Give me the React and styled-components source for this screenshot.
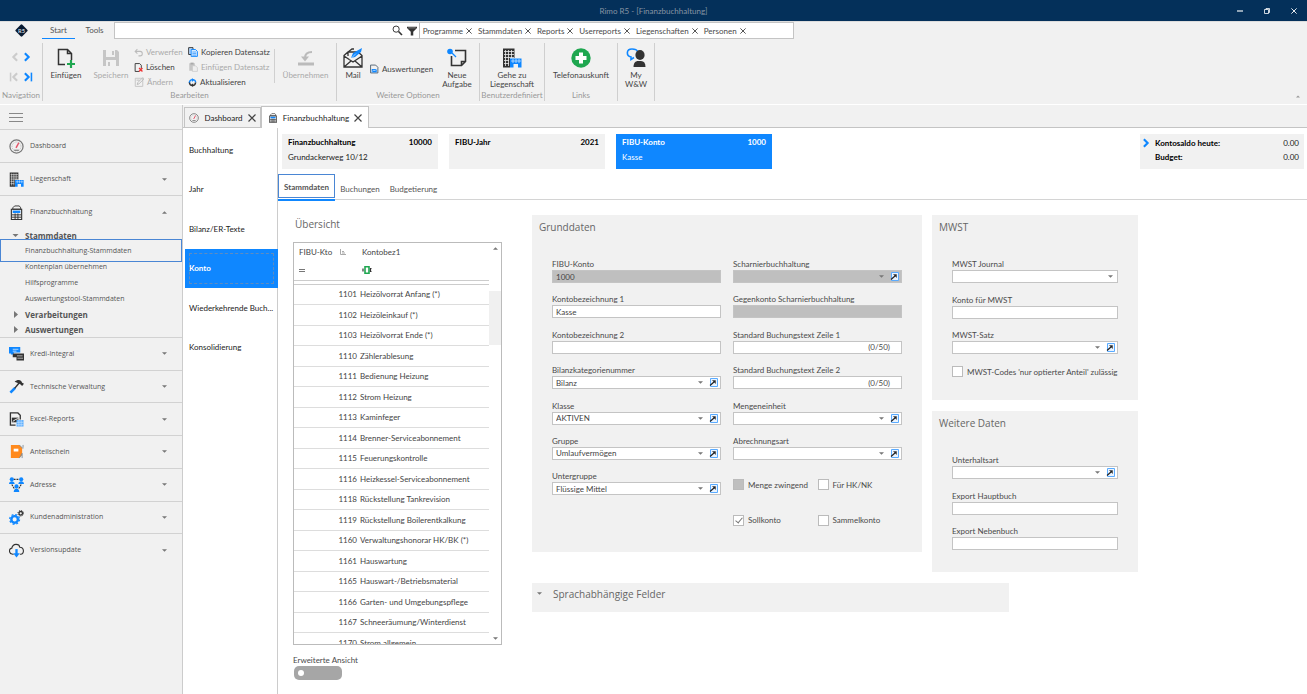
import React from 'react'
import styled, { createGlobalStyle, css } from 'styled-components'

const BLUE = '#0f87ff'
const DARK = '#333'
const GREEN = '#1fa750'

const GlobalStyle = createGlobalStyle`
  * {
    box-sizing: border-box;
  }

  body {
    margin: 0;
    background: #fff;
    color: #4a4a4a;
    font-family: Lato, 'Noto Sans', sans-serif;
    font-size: 8px;
    line-height: 10px;
  }

  button, input, select {
    margin: 0;
    padding: 0;
    border: 0;
    background: none;
    color: inherit;
    font: inherit;
  }

  h2, p, ul {
    margin: 0;
    padding: 0;
    font-weight: normal;
    list-style: none;
  }

  a {
    color: inherit;
    text-decoration: none;
  }

  svg {
    display: block;
    flex: none;
  }
`

/* ---------- icons ---------- */

const Icon = ({ w = 16, h = w, box = '0 0 16 16', children }) => (
  <svg width={w} height={h} viewBox={box} fill='none' aria-hidden='true'>{children}</svg>
)

const Logo = () => (
  <Icon w={13} h={13}>
    <path d='M8 2 14 8 8 14 2 8Z' fill='#0a1c33' stroke='#0a1c33' strokeWidth='3' strokeLinejoin='round' />
    <text x='8' y='10.500' fontSize='7' fontWeight='bold' textAnchor='middle' fill='#ccd4dd'>R5</text>
  </Icon>
)

const Chevron = ({ left, bar, color }) => (
  <Icon w={10}>
    <g transform={left ? 'translate(16 0) scale(-1 1)' : undefined} stroke={color} strokeWidth='3.400'>
      <path d='M3 2l6 6-6 6' />
      {bar && <path d='M13.500 1v14' strokeWidth='2.500' />}
    </g>
  </Icon>
)

const Caret = ({ up, w = 5, color = '#777' }) => (
  <Icon w={w} h={3} box='0 0 6 3'>
    <path d={up ? 'M0 3h6L3 0Z' : 'M0 0h6L3 3Z'} fill={color} />
  </Icon>
)

const Cross = ({ size = 6, color = '#444' }) => (
  <Icon w={size}><path d='M1 1l14 14M15 1L1 15' stroke={color} strokeWidth='2.400' /></Icon>
)

const NewPage = () => (
  <Icon w={20} h={20} box='0 0 20 20'>
    <path d='M9 16.500H2.500V1.500h9l4 4V12M11.500 1.500v4h4' stroke={DARK} strokeWidth='1.500' />
    <path d='M15 12v8M11 16h8' stroke={GREEN} strokeWidth='2.200' />
  </Icon>
)

const Floppy = () => (
  <Icon w={18} h={18} box='0 0 18 18'>
    <path d='M1 1h14l2 2v14H1Z' fill='#c6c6c6' />
    <path d='M4 1h9v7H4ZM4 11h10v6H4Z' fill='#f1f1f1' />
    <path d='M10 2h2v4h-2ZM6 13h2v4H6Z' fill='#c6c6c6' />
  </Icon>
)

const Undo = () => (
  <Icon w={9}>
    <path d='M6 2L2 6l4 4M2 6h9c5 0 5 8 0 8H8' stroke='#bbb' strokeWidth='1.800' />
  </Icon>
)

const DeletePage = () => (
  <Icon w={9}>
    <path d='M9 15H2V1h8l3 3v6' stroke={DARK} strokeWidth='1.600' />
    <path d='M9 9l6 6M15 9l-6 6' stroke='#e33' strokeWidth='2.400' />
  </Icon>
)

const EditPage = () => (
  <Icon w={10}>
    <path d='M2 2h12v13H2Z' stroke='#c4c4c4' strokeWidth='1.500' />
    <path d='M5 12l1-3 8-8 2 2-8 8ZM4 5h5' stroke='#bbb' strokeWidth='1.500' />
  </Icon>
)

const CopyIcon = () => (
  <Icon w={10}>
    <path d='M1 1h7v11H1Z' fill='#b6d9ff' stroke={DARK} strokeWidth='1.500' />
    <path d='M5 4h7l3 3v8H5Z' fill='#d8ebff' stroke={BLUE} strokeWidth='1.500' />
    <path d='M7 8h6M7 10.500h6M7 13h6' stroke={BLUE} />
  </Icon>
)

const PasteIcon = () => (
  <Icon w={10}>
    <path d='M2 2h9v12H2Z' fill='#c6c6c6' />
    <path d='M4 1h5v3H4Z' fill='#aaa' />
    <path d='M7 6h5l3 3v6H7Z' fill='#eee' stroke='#c0c0c0' />
  </Icon>
)

const Refresh = () => (
  <Icon w={9}>
    <path d='M2.500 9C2 1 14 1 13.500 8' stroke={BLUE} strokeWidth='2.600' />
    <path d='M2.500 8C3 15 13 15 13.500 8' stroke={DARK} strokeWidth='2.600' />
    <path d='M7 0l4 3.500L7 7Z' fill={BLUE} />
    <path d='M9 9.500L5 13l4 3Z' fill={DARK} />
  </Icon>
)

const Apply = () => (
  <Icon w={18} h={16} box='0 0 18 16'>
    <path d='M1 14h16' stroke='#bbb' strokeWidth='3' />
    <path d='M15 2c-5 0-7 2-7 6' stroke='#bbb' strokeWidth='2' />
    <path d='M4 6.500l4 5 4-5Z' fill='#bbb' />
  </Icon>
)

const MailIcon = () => (
  <Icon w={20} h={20} box='0 0 20 20'>
    <path d='M1 7.500L5 4h10l4 3.500V19H1ZM1 8l9 6 9-6M1 19l7-6M19 19l-7-6M5 8V4l4-3h2' stroke={DARK} strokeWidth='1.300' />
    <path d='M8 10l2-5 9-5-1 4-6 5Z' fill={BLUE} />
    <path d='M7 11.500l6-6' stroke='#fff' strokeWidth='.6' />
  </Icon>
)

const ReportIcon = () => (
  <Icon w={9} h={10}>
    <path d='M1 1h9l4 4v10H1Z' stroke='#456' strokeWidth='1.500' />
    <path d='M3 8h9v6H3Z' fill={BLUE} />
    <path d='M4 12l3-2 2 1 3-3' stroke='#fff' />
  </Icon>
)

const TaskIcon = () => (
  <Icon w={20} h={20} box='0 0 20 20'>
    <path d='M8 2.500h10.500v11l-4 4H4.500V8M18.500 13.500h-4v4' stroke={DARK} strokeWidth='1.600' />
    <path d='M5 5l4 4' stroke={BLUE} strokeWidth='1.200' />
    <circle cx='3' cy='3.500' r='2.800' fill={BLUE} />
  </Icon>
)

const Buildings = ({ w = 20 }) => (
  <Icon w={w} box='0 0 20 20'>
    <path d='M1 .5h11.500V10H8v9.500H1Z' fill={DARK} />
    <path d='M3.500 2v16M6.500 2v16M9.500 2v8M2 3.500h10M2 6.500h10M2 9.500h10M2 12.500h5M2 15.500h5' stroke='#eee' strokeWidth='.8' />
    <path d='M8 10.500h11.500v9H16V16h-4.500v3.500H8Z' fill={BLUE} />
    <path d='M9 13h10M11 11v4M14 11v4M17 11v4' stroke='#d5e9ff' strokeWidth='.7' />
  </Icon>
)

const PlusCircle = () => (
  <Icon w={20} box='0 0 20 20'>
    <circle cx='10' cy='10' r='9.700' fill={GREEN} />
    <path d='M10 4.500v11M4.500 10h11' stroke='#fff' strokeWidth='4' />
  </Icon>
)

const PersonChat = () => (
  <Icon w={20} box='0 0 20 20'>
    <path d='M8 9.500l-3 2V9C0 8 0 1 6 1c3 0 5 1 5.500 2.500' stroke={BLUE} strokeWidth='1.600' />
    <ellipse cx='14' cy='7' rx='4.600' ry='5' fill={DARK} />
    <path d='M7.500 19c0-4 2-6 4.500-6h3c3 0 4.500 2 4.500 6Z' fill={DARK} />
  </Icon>
)

const SearchIcon = () => (
  <Icon w={11}>
    <circle cx='6' cy='6' r='4.500' stroke={DARK} strokeWidth='1.400' />
    <path d='M9.500 9.500l5 5' stroke={DARK} strokeWidth='2.400' />
  </Icon>
)

const Funnel = () => (
  <Icon w={10}>
    <path d='M0 1h16v2l-6 6v6H6V9L0 3Z' fill={DARK} />
    <path d='M2 3h12' stroke='#aaa' />
  </Icon>
)

const Gauge = ({ w = 15 }) => (
  <Icon w={w}>
    <circle cx='8' cy='8' r='7' stroke='#777' strokeWidth='1.300' />
    <circle cx='8' cy='8' r='4.800' stroke='#aaa' strokeWidth='.8' strokeDasharray='1 1' />
    <path d='M7.500 9.500L10.500 4' stroke='#e5566a' strokeWidth='1.600' />
    <path d='M5.500 12h5' stroke='#777' strokeWidth='1.200' />
  </Icon>
)

const Ledger = ({ w = 15 }) => (
  <Icon w={w}>
    <path d='M2.500 4.500h11v11h-11Z' fill='#eee' stroke={DARK} strokeWidth='1.200' />
    <path d='M4 4.500V3l2-2h5l1.500 2v1.500Z' stroke={DARK} />
    <path d='M4 6h8v2.500H4Z' fill={BLUE} />
    <path d='M3 10.500h10M3 13h10M6.500 9v6M9.500 9v6' stroke={DARK} />
  </Icon>
)

const Credit = () => (
  <Icon w={15}>
    <path d='M0 1h12v6H5v2H2V8H0Z' fill={BLUE} />
    <path d='M4 3.500h6M4 5.500h4' stroke='#b9dcff' />
    <path d='M4 8h12v7.500H8V12H4Z' fill={DARK} />
    <path d='M8.500 10.500h6M9 13h6' stroke='#bbb' />
  </Icon>
)

const Hammer = () => (
  <Icon w={15}>
    <path d='M1.500 14.500l5-5' stroke={BLUE} strokeWidth='2.800' />
    <path d='M6 10l5-6' stroke={DARK} strokeWidth='1.600' />
    <path d='M6 3c2-2 5-2.500 7-1l1 2 2 1-2 2.500-2-2-2-1Z' fill={DARK} />
  </Icon>
)

const ExcelIcon = () => (
  <Icon w={15}>
    <path d='M7 14H1.500V1h8L12 3.500V8' stroke={DARK} strokeWidth='1.400' />
    <path d='M3 6h7v5H3Z' fill={DARK} />
    <path d='M4 10l3-2 3-1' stroke='#fff' />
    <path d='M8 8.500h7.500v7H8Z' fill='#5fb0ff' />
    <path d='M8 11h7.500M8 13.500h7.500M10.500 8.500v7M13 8.500v7' stroke='#cfe6ff' strokeWidth='.6' />
  </Icon>
)

const ShareCert = () => (
  <Icon w={15}>
    <path d='M2 1h9l3 3v8l-3 3H2Z' fill='#ff8a1e' />
    <path d='M5 5h5v3H5Z' fill='#fff' />
    <path d='M11 1l4 4M15 1v3M11 15l3-5v5' stroke='#789' strokeWidth='.9' />
  </Icon>
)

const People = () => (
  <Icon w={15}>
    <path d='M5 2.500h6M3 8l3 5M13 8l-3 5' stroke={DARK} strokeWidth='1.200' strokeDasharray='2 1' />
    <g fill={BLUE}>
      <circle cx='3' cy='2.500' r='2.200' /><path d='M0 7.500c0-4 6-4 6 0Z' />
      <circle cx='13' cy='2.500' r='2.200' /><path d='M10 7.500c0-4 6-4 6 0Z' />
      <circle cx='8' cy='10' r='2.200' /><path d='M5 16c0-5 6-5 6 0Z' />
    </g>
  </Icon>
)

const Gears = () => (
  <Icon w={15}>
    <circle cx='6' cy='10' r='3.500' stroke={BLUE} strokeWidth='2.600' />
    <circle cx='6' cy='10' r='5.200' stroke={BLUE} strokeWidth='1.400' strokeDasharray='2.080 2' />
    <circle cx='12.500' cy='3.500' r='1.900' stroke={DARK} strokeWidth='1.400' />
    <circle cx='12.500' cy='3.500' r='3' stroke={DARK} strokeDasharray='1.200 1.160' />
  </Icon>
)

const CloudDown = () => (
  <Icon w={15}>
    <path d='M5 12H4C-.5 11.500-.5 6 3 5.500 4 0 11 .5 11.500 4.500c5 0 5 7.500 1 7.500h-1' stroke={DARK} strokeWidth='1.200' />
    <path d='M8 6.500V13' stroke={BLUE} strokeWidth='2.500' />
    <path d='M4.500 11h7L8 15.500Z' fill={BLUE} />
  </Icon>
)

const JumpIcon = () => (
  <Icon w={9} h={9} box='0 0 9 9'>
    <path d='M1.500 .5h7v8h-7Z' fill='#eaf4ff' stroke='#5aabff' />
    <path d='M3.500 2.500H6.500v3Z' fill='#222' stroke='#222' strokeWidth='.4' />
    <path d='M1 7.500l4-3.500' stroke='#222' strokeWidth='1.200' />
  </Icon>
)

/* ---------- window title and ribbon ---------- */

const Page = styled.div`
  display: flex;
  flex-direction: column;
  min-height: 100vh;
`

const TitleBar = styled.header`
  display: grid;
  grid-template-columns: 1fr auto 1fr;
  align-items: center;
  height: 21px;
  background: #04305a;
  color: #8794a3;
`

const WindowButtons = styled.div`
  display: flex;
  justify-content: flex-end;

  button {
    display: flex;
    align-items: center;
    justify-content: center;
    width: 27px;
    height: 20px;
  }
`

const Ribbon = styled.div`
  height: 84px;
  background: #f1f1f1;
  border-bottom: 1px solid #fff;
  border-top: 1px solid #ddd;
`

const RibbonTop = styled.div`
  display: flex;
  height: 17px;
`

const LogoBox = styled.div`
  display: flex;
  align-items: center;
  justify-content: center;
  width: 42px;
`

const RibbonTab = styled.button`
  width: ${props => (props.$wide ? '39px' : '33px')};
  height: 17px;
  color: #555;
  border-bottom: 1px solid ${props => (props.$active ? BLUE : 'transparent')};
`

const SearchBar = styled.div`
  display: flex;
  align-items: center;
  width: 52%;
  height: 17px;
  background: #fff;
  border: 1px solid #c4c4c4;

  input {
    flex: 1;
    min-width: 0;
    height: 14px;
    outline: 0;
  }
`

const SearchTools = styled.div`
  display: flex;
  align-items: center;
  gap: 4px;
  height: 16px;
  padding-right: 2px;
  border-right: 1px solid #bbb;
`

const Chips = styled.div`
  display: flex;
  gap: 6px;
  width: 373px;
  padding-left: 3px;
`

const Chip = styled.button`
  display: flex;
  align-items: center;
  gap: 3px;
  white-space: nowrap;
`

const RibbonBody = styled.div`
  display: flex;
  height: 65px;
  padding: 4px 0 3px;
`

const Group = styled.section`
  display: flex;
  flex-direction: column;
  width: ${props => props.$width};
  border-right: 1px solid #cfcfcf;
`

const GroupItems = styled.div`
  display: flex;
  flex: 1;
`

const GroupName = styled.p`
  height: 11px;
  color: #999;
  text-align: center;
  white-space: nowrap;
`

const NavGrid = styled.div`
  display: grid;
  grid-template-columns: 14px 14px;
  grid-auto-rows: 20px;
  justify-content: center;
  flex: 1;
  padding-top: 4px;

  button {
    display: flex;
    align-items: center;
    justify-content: center;
  }
`

const BigButton = styled.button`
  display: flex;
  flex-direction: column;
  align-items: center;
  flex: ${props => (props.$width ? '0 0 auto' : '1 0 auto')};
  width: ${props => props.$width || 'auto'};
  padding-top: 5px;
  line-height: 9px;
  color: ${props => (props.disabled ? '#aaa' : '#444')};

  span {
    display: flex;
    align-items: center;
    height: 20px;
    margin-bottom: 3px;
  }
`

const SmallColumn = styled.div`
  display: flex;
  flex-direction: column;
  justify-content: ${props => (props.$center ? 'center' : 'flex-start')};
  gap: 5px;
  width: ${props => props.$width};
  padding: 4px 0 0 1px;
`

const SmallButton = styled.button`
  display: flex;
  align-items: center;
  gap: 3px;
  height: 10px;
  color: ${props => (props.disabled ? '#aaa' : '#444')};
  white-space: nowrap;
`

const Divider = styled.div`
  width: 1px;
  height: 34px;
  margin-top: 6px;
  background: #d0d0d0;
`

const Collapse = styled.button`
  align-self: flex-end;
  margin: 0 7px 3px auto;
`

/* ---------- main navigation ---------- */

const Body = styled.div`
  display: flex;
  flex: 1;
`

const Sidebar = styled.nav`
  flex: 0 0 183px;
  background: #f1f1f1;
  border-right: 1px solid #ccc;
  font-family: 'Open Sans', sans-serif;
  font-size: 7px;
`

const MenuToggle = styled.button`
  display: flex;
  flex-direction: column;
  justify-content: center;
  gap: 3px;
  width: 100%;
  height: 25px;
  padding-left: 9px;
  border-bottom: 1px solid #d2d2d2;

  i {
    width: 14px;
    height: 1px;
    background: #888;
  }
`

const MenuItem = styled.button`
  display: flex;
  align-items: center;
  gap: 6px;
  width: 100%;
  height: ${props => (props.$open ? '32px' : '33px')};
  padding: 0 15px 0 9px;
  color: #555;
  border-bottom: ${props => (props.$open ? 'none' : '1px solid #d2d2d2')};

  span {
    flex: 1;
    text-align: left;
  }
`

const Modules = styled.div`
  display: grid;
  grid-auto-rows: 1fr;
  height: 229px;

  ${MenuItem} {
    height: auto;
  }

  ${MenuItem}:last-child {
    border-bottom-color: transparent;
  }
`

const SubMenu = styled.ul`
  border-bottom: 1px solid #d2d2d2;
`

const SubHeading = styled.button`
  display: flex;
  align-items: center;
  gap: 6px;
  height: 15px;
  padding-left: 12px;
  font-size: 8px;
  font-weight: bold;
  color: #555;

  span {
    display: flex;
    justify-content: center;
    width: 7px;
  }
`

const SubLink = styled.a`
  display: flex;
  align-items: center;
  height: ${props => (props.$current ? '23px' : '16px')};
  margin: ${props => (props.$current ? '-4px 0 -3px' : '0')};
  padding-left: ${props => (props.$current ? '24px' : '25px')};
  border: ${props => (props.$current ? '1px solid #4a86d4' : '0')};
  color: #555;
`

/* ---------- document area ---------- */

const Document = styled.div`
  display: flex;
  flex-direction: column;
  flex: 1;
  min-width: 0;
`

const DocTabs = styled.div`
  display: flex;
  align-items: flex-end;
  height: 23px;
  padding-left: 1px;
  background: #f1f1f1;
  border-bottom: 1px solid #c4c4c4;
`

const DocTab = styled.button`
  display: flex;
  align-items: center;
  justify-content: center;
  gap: 5px;
  width: ${props => (props.$active ? '108px' : '77px')};
  height: ${props => (props.$active ? '22px' : '20px')};
  margin-bottom: ${props => (props.$active ? '-1px' : '0')};
  background: ${props => (props.$active ? '#fff' : '#f1f1f1')};
  border: 1px solid #c4c4c4;
  border-bottom: 0;
  color: #222;
`

const Columns = styled.div`
  display: flex;
  flex: 1;
`

const Steps = styled.nav`
  flex: 0 0 95px;
  padding: 2px 0 0 2px;
  border-right: 1px solid #ccc;

  ul {
    display: grid;
    grid-auto-rows: 1fr;
    height: 237px;
  }
`

const Step = styled.a`
  display: flex;
  align-items: center;
  height: 100%;
  padding-left: 4px;
  white-space: nowrap;
  color: #222;

  ${props => props.$active && css`
    margin-right: -1px;
    background: ${BLUE};
    color: #fff;
    font-weight: bold;
    outline: 1px dashed #5f8cc0;
    outline-offset: -5px;
  `}
`

const Content = styled.main`
  flex: 1;
  min-width: 0;
  padding-top: 6px;
`

const Cards = styled.div`
  display: flex;
  gap: 11px;
  padding: 0 3px 0 4px;
`

const Card = styled.div`
  display: grid;
  grid-template-columns: 1fr auto;
  align-content: start;
  row-gap: 5px;
  flex: 0 1 156px;
  height: 35px;
  padding: 3px 6px;
  background: ${props => (props.$active ? BLUE : '#f1f1f1')};
  color: ${props => (props.$active ? '#fff' : '#222')};

  b {
    color: ${props => (props.$active ? '#fff' : '#000')};
  }
`

const Balance = styled.div`
  display: grid;
  grid-template-columns: 13px 1fr auto;
  align-content: start;
  row-gap: 4px;
  flex: 0 1 164px;
  height: 35px;
  margin-left: auto;
  padding: 4px 5px 0 2px;
  background: #f1f1f1;
  color: #222;

  b {
    grid-column: 2;
    color: #000;
  }
`

const PageTabs = styled.div`
  display: flex;
  height: 26px;
  margin-top: 5px;
  border-bottom: 1px solid #d4d4d4;
`

const PageTab = styled.button`
  width: ${props => props.$width};
  height: 27px;
  padding-top: 2px;
  color: #555;

  ${props => props.$active && css`
    padding: 0 0 2px;
    border-bottom: 2px solid ${BLUE};
    font-weight: bold;

    span {
      display: block;
      padding: 7px 0 5px;
      border: 1px solid #4a86d4;
    }
  `}
`

const Workspace = styled.div`
  display: flex;
  align-items: flex-start;
  gap: 30px;
  padding: 15px 171px 0 15px;
`

const Heading = styled.h2`
  font-family: 'Open Sans', sans-serif;
  font-size: 10px;
  line-height: 14px;
  color: #666;
`

const Overview = styled.section`
  flex: 0 0 209px;

  ${Heading} {
    padding: 2px 0 11px 2px;
  }
`

const GridBox = styled.div`
  display: flex;
  height: 403px;
  border: 1px solid #bbb;
  overflow: hidden;
`

const AccountTable = styled.table`
  flex: 1;
  align-self: flex-start;
  border-collapse: collapse;
  table-layout: fixed;
  width: 195px;
  color: #444;

  th, td {
    padding: 0;
    font-weight: normal;
    text-align: left;
    white-space: nowrap;
  }

  thead th {
    height: 18px;
  }

  thead tr + tr th {
    height: 19px;
    border-bottom: 1px solid #ccc;
  }

  th:first-child {
    width: 66px;
    padding-left: 5px;
  }

  thead th + th {
    padding-left: 2px;
  }

  tbody td {
    height: 20px;
    border-bottom: 1px solid #ddd;
  }

  tbody tr:nth-child(odd) td {
    height: 21px;
  }

  tbody td:first-child {
    padding-right: 3px;
    text-align: right;
  }

  tbody tr:first-child td {
    height: 4px;
    border-bottom-color: #ccc;
  }
`

const HeadCell = styled.div`
  display: flex;
  align-items: center;
  gap: 8px;
`

const Scrollbar = styled.div`
  display: flex;
  flex-direction: column;
  align-items: center;
  width: 12px;
  padding: 4px 0;

  i {
    width: 12px;
    height: 54px;
    margin: 41px 0 auto;
    background: #f0f0f0;
  }
`

const SwitchLabel = styled.label`
  display: block;
  padding-top: 10px;
`

const Switch = styled.input`
  display: flex;
  align-items: center;
  appearance: none;
  width: 48px;
  height: 14px;
  margin: 1px 0 0 1px;
  padding-left: 4px;
  background: #a6a6a6;
  border-radius: 5px;

  &::before {
    content: '';
    width: 6px;
    height: 6px;
    border-radius: 50%;
    background: #fff;
  }
`

const Panels = styled.div`
  display: grid;
  grid-template-columns: minmax(0, 390fr) minmax(0, 204fr);
  align-items: start;
  gap: 11px 10px;
  flex: 1;
`

const Side = styled.div`
  display: grid;
  gap: 11px;
`

const Panel = styled.section`
  padding: 5px 20px ${props => props.$bottom} 20px;
  background: #f1f1f1;

  ${Heading} {
    margin-left: -13px;
  }
`

const Fields = styled.div`
  display: grid;
  grid-template-columns: repeat(${props => props.$columns || 1}, minmax(0, 1fr));
  grid-template-rows: repeat(${props => props.$rows}, 1fr);
  column-gap: 12px;
  height: ${props => props.$height};
  margin-top: 25px;
`

const FieldBox = styled.div`
  display: flex;
  align-items: center;
  height: 13px;
  margin-top: 1px;
  padding-right: ${props => (props.$jump ? '2px' : '4px')};
  border: 1px solid #c4c4c4;
  background: ${props => (props.$disabled ? '#bfbfbf' : '#fff')};

  input, select {
    flex: 1;
    min-width: 0;
    height: 11px;
    padding: 0 3px;
    appearance: none;
    opacity: 1;
    color: #444;
    outline: 0;
  }

  button {
    margin-left: 6px;
  }

  small {
    padding-right: 7px;
    font-size: 8px;
  }
`

const Checks = styled.div`
  display: grid;
  grid-template-columns: 1fr 1fr;
  align-content: start;
  padding-top: 8px;
`

const CheckLabel = styled.label`
  display: flex;
  align-items: center;
  gap: 4px;
  white-space: nowrap;
`

const Checkbox = styled.input`
  display: flex;
  align-items: center;
  justify-content: center;
  flex: none;
  appearance: none;
  width: 11px;
  height: 11px;
  border: 1px solid #bbb;
  background: ${props => (props.disabled ? '#bfbfbf' : '#fff')};

  &:checked::before {
    content: '';
    width: 3px;
    height: 6px;
    margin-top: -2px;
    border: solid #777;
    border-width: 0 1px 1px 0;
    transform: rotate(40deg);
  }
`

const LanguagePanel = styled.section`
  grid-column: 1 / -1;
  display: flex;
  align-items: flex-start;
  gap: 11px;
  width: 79%;
  height: 29px;
  padding: 4px 5px;
  background: #f1f1f1;

  button {
    padding-top: 5px;
  }
`

const accounts = [
  ['1101', 'Heizölvorrat Anfang (*)'],
  ['1102', 'Heizöleinkauf (*)'],
  ['1103', 'Heizölvorrat Ende (*)'],
  ['1110', 'Zählerablesung'],
  ['1111', 'Bedienung Heizung'],
  ['1112', 'Strom Heizung'],
  ['1113', 'Kaminfeger'],
  ['1114', 'Brenner-Serviceabonnement'],
  ['1115', 'Feuerungskontrolle'],
  ['1116', 'Heizkessel-Serviceabonnement'],
  ['1118', 'Rückstellung Tankrevision'],
  ['1119', 'Rückstellung Boilerentkalkung'],
  ['1160', 'Verwaltungshonorar HK/BK (*)'],
  ['1161', 'Hauswartung'],
  ['1165', 'Hauswart-/Betriebsmaterial'],
  ['1166', 'Garten- und Umgebungspflege'],
  ['1167', 'Schneeräumung/Winterdienst'],
  ['1170', 'Strom allgemein']
]

const modules = [
  ['Kredi-Integral', Credit],
  ['Technische Verwaltung', Hammer],
  ['Excel-Reports', ExcelIcon],
  ['Anteilschein', ShareCert],
  ['Adresse', People],
  ['Kundenadministration', Gears],
  ['Versionsupdate', CloudDown]
]

const steps = ['Buchhaltung', 'Jahr', 'Bilanz/ER-Texte', 'Konto', 'Wiederkehrende Buch...', 'Konsolidierung']
const filters = ['Programme', 'Stammdaten', 'Reports', 'Userreports', 'Liegenschaften', 'Personen']

function Field ({ label, value = '', select, jump, disabled, counter }) {
  const id = label.toLowerCase().replace(/[^a-z0-9]+/g, '-')
  return (
    <div>
      <label htmlFor={id}>{label}</label>
      <FieldBox $disabled={disabled} $jump={jump}>
        {select
          ? <select id={id} disabled={disabled} defaultValue={value}><option>{value}</option></select>
          : <input id={id} disabled={disabled} defaultValue={value} />
        }
        {select && <Caret />}
        {counter && <small>{counter}</small>}
        {jump && <button aria-label={`${label} öffnen`}><JumpIcon /></button>}
      </FieldBox>
    </div>
  )
}

function Check ({ label, ...rest }) {
  return (
    <CheckLabel>
      <Checkbox type='checkbox' {...rest} />
      {label}
    </CheckLabel>
  )
}

function RibbonBar () {
  return (
    <Ribbon>
      <RibbonTop>
        <LogoBox><Logo /></LogoBox>
        <RibbonTab $active>Start</RibbonTab>
        <RibbonTab $wide>Tools</RibbonTab>
        <SearchBar>
          <input aria-label='Suche' />
          <SearchTools><SearchIcon /><Funnel /></SearchTools>
          <Chips>
            {filters.map(name => <Chip key={name}>{name}<Cross /></Chip>)}
          </Chips>
        </SearchBar>
      </RibbonTop>
      <RibbonBody>
        <Group $width='43px'>
          <NavGrid>
            <button aria-label='Zurück'><Chevron left color='#ccc' /></button>
            <button aria-label='Weiter'><Chevron color={BLUE} /></button>
            <button aria-label='Erster'><Chevron left bar color='#ccc' /></button>
            <button aria-label='Letzter'><Chevron bar color={BLUE} /></button>
          </NavGrid>
          <GroupName>Navigation</GroupName>
        </Group>
        <Group $width='294px'>
          <GroupItems>
            <BigButton $width='46px'><span><NewPage /></span>Einfügen</BigButton>
            <BigButton $width='44px' disabled><span><Floppy /></span>Speichern</BigButton>
            <SmallColumn $width='54px'>
              <SmallButton disabled><Undo />Verwerfen</SmallButton>
              <SmallButton><DeletePage />Löschen</SmallButton>
              <SmallButton disabled><EditPage />Ändern</SmallButton>
            </SmallColumn>
            <SmallColumn $width='87px'>
              <SmallButton><CopyIcon />Kopieren Datensatz</SmallButton>
              <SmallButton disabled><PasteIcon />Einfügen Datensatz</SmallButton>
              <SmallButton><Refresh />Aktualisieren</SmallButton>
            </SmallColumn>
            <Divider />
            <BigButton disabled><span><Apply /></span>Übernehmen</BigButton>
          </GroupItems>
          <GroupName>Bearbeiten</GroupName>
        </Group>
        <Group $width='143px'>
          <GroupItems>
            <BigButton $width='32px'><span><MailIcon /></span>Mail</BigButton>
            <SmallColumn $width='66px' $center>
              <SmallButton><ReportIcon />Auswertungen</SmallButton>
            </SmallColumn>
            <BigButton><span><TaskIcon /></span>Neue<br />Aufgabe</BigButton>
          </GroupItems>
          <GroupName>Weitere Optionen</GroupName>
        </Group>
        <Group $width='65px'>
          <GroupItems>
            <BigButton><span><Buildings /></span>Gehe zu<br />Liegenschaft</BigButton>
          </GroupItems>
          <GroupName>Benutzerdefiniert</GroupName>
        </Group>
        <Group $width='73px'>
          <GroupItems>
            <BigButton><span><PlusCircle /></span>Telefonauskunft</BigButton>
          </GroupItems>
          <GroupName>Links</GroupName>
        </Group>
        <Group $width='37px'>
          <GroupItems>
            <BigButton><span><PersonChat /></span>My<br />W&amp;W</BigButton>
          </GroupItems>
          <GroupName />
        </Group>
        <Collapse aria-label='Menüband minimieren'><Caret up w={4} color='#999' /></Collapse>
      </RibbonBody>
    </Ribbon>
  )
}

function MainMenu () {
  return (
    <Sidebar>
      <MenuToggle aria-label='Menü'><i /><i /><i /></MenuToggle>
      <MenuItem><Gauge /><span>Dashboard</span></MenuItem>
      <MenuItem><Buildings w={15} /><span>Liegenschaft</span><Caret /></MenuItem>
      <MenuItem $open><Ledger /><span>Finanzbuchhaltung</span><Caret up /></MenuItem>
      <SubMenu>
        <li><SubHeading><span><Caret w={7} /></span>Stammdaten</SubHeading></li>
        <li><SubLink href='#stammdaten' $current>Finanzbuchhaltung-Stammdaten</SubLink></li>
        <li><SubLink href='#kontenplan'>Kontenplan übernehmen</SubLink></li>
        <li><SubLink href='#hilfsprogramme'>Hilfsprogramme</SubLink></li>
        <li><SubLink href='#auswertungstool'>Auswertungstool-Stammdaten</SubLink></li>
        {['Verarbeitungen', 'Auswertungen'].map(name => (
          <li key={name}>
            <SubHeading>
              <span><Icon w={4} h={7} box='0 0 4 7'><path d='M0 0v7l4-3.500Z' fill='#777' /></Icon></span>
              {name}
            </SubHeading>
          </li>
        ))}
      </SubMenu>
      <Modules>
        {modules.map(([name, ModuleIcon]) => (
          <MenuItem key={name}><ModuleIcon /><span>{name}</span><Caret /></MenuItem>
        ))}
      </Modules>
    </Sidebar>
  )
}

function AccountList () {
  return (
    <Overview>
      <Heading>Übersicht</Heading>
      <GridBox>
        <AccountTable>
          <thead>
            <tr>
              <th>
                <HeadCell>
                  FIBU-Kto
                  <Icon w={6} h={6} box='0 0 6 6'><path d='M.5 0v5.500H6M2 2.500h2M2 4h3' stroke='#aaa' /></Icon>
                </HeadCell>
              </th>
              <th>Kontobez1</th>
            </tr>
            <tr>
              <th><Icon w={6} h={3} box='0 0 6 3'><path d='M0 .5h6M0 2.500h6' stroke='#777' /></Icon></th>
              <th>
                <Icon w={10} h={8} box='0 0 10 8'>
                  <path d='M3 .8h4v6.400H3Z' stroke={GREEN} strokeWidth='1.600' />
                  <path d='M1 2.500v3M9.500 2.500H8.500v3h1' stroke={DARK} strokeWidth='1.200' />
                </Icon>
              </th>
            </tr>
          </thead>
          <tbody>
            <tr><td /><td /></tr>
            {accounts.map(([number, name]) => (
              <tr key={number}><td>{number}</td><td>{name}</td></tr>
            ))}
          </tbody>
        </AccountTable>
        <Scrollbar><Caret up /><i /><Caret /></Scrollbar>
      </GridBox>
      <SwitchLabel htmlFor='extended'>Erweiterte Ansicht</SwitchLabel>
      <Switch id='extended' type='checkbox' />
    </Overview>
  )
}

function AccountForm () {
  return (
    <Panels>
      <Panel $bottom='10px'>
        <Heading>Grunddaten</Heading>
        <Fields $columns={2} $rows={8} $height='283px'>
          <Field label='FIBU-Konto' value='1000' disabled />
          <Field label='Scharnierbuchhaltung' select jump disabled />
          <Field label='Kontobezeichnung 1' value='Kasse' />
          <Field label='Gegenkonto Scharnierbuchhaltung' disabled />
          <Field label='Kontobezeichnung 2' />
          <Field label='Standard Buchungstext Zeile 1' counter='(0/50)' />
          <Field label='Bilanzkategorienummer' value='Bilanz' select jump />
          <Field label='Standard Buchungstext Zeile 2' counter='(0/50)' />
          <Field label='Klasse' value='AKTIVEN' select jump />
          <Field label='Mengeneinheit' select jump />
          <Field label='Gruppe' value='Umlaufvermögen' select jump />
          <Field label='Abrechnungsart' select jump />
          <Field label='Untergruppe' value='Flüssige Mittel' select jump />
          <Checks>
            <Check label='Menge zwingend' disabled />
            <Check label='Für HK/NK' />
          </Checks>
          <div />
          <Checks>
            <Check label='Sollkonto' defaultChecked />
            <Check label='Sammelkonto' />
          </Checks>
        </Fields>
      </Panel>
      <Side>
        <Panel $bottom='23px'>
          <Heading>MWST</Heading>
          <Fields $rows={3} $height='107px'>
            <Field label='MWST Journal' select />
            <Field label='Konto für MWST' />
            <Field label='MWST-Satz' select jump />
          </Fields>
          <Check label={'MWST-Codes \'nur optierter Anteil\' zulässig'} />
        </Panel>
        <Panel $bottom='10px'>
          <Heading>Weitere Daten</Heading>
          <Fields $rows={3} $height='107px'>
            <Field label='Unterhaltsart' select jump />
            <Field label='Export Hauptbuch' />
            <Field label='Export Nebenbuch' />
          </Fields>
        </Panel>
      </Side>
      <LanguagePanel>
        <button aria-label='Aufklappen'><Caret /></button>
        <Heading>Sprachabhängige Felder</Heading>
      </LanguagePanel>
    </Panels>
  )
}

function App () {
  return (
    <Page>
      <GlobalStyle />
      <TitleBar>
        <div />
        <p>Rimo R5 - [Finanzbuchhaltung]</p>
        <WindowButtons>
          <button aria-label='Minimieren'><Icon w={6} h={6}><path d='M0 8h16' stroke='#fff' strokeWidth='3' /></Icon></button>
          <button aria-label='Wiederherstellen'>
            <Icon w={6} h={6} box='0 0 6 6'><path d='M.5 1.500h4v4h-4ZM2 1.500v-1h3.500v4h-1' stroke='#fff' strokeWidth='.8' /></Icon>
          </button>
          <button aria-label='Schliessen'><Cross size={6} color='#fff' /></button>
        </WindowButtons>
      </TitleBar>
      <RibbonBar />
      <Body>
        <MainMenu />
        <Document>
          <DocTabs>
            <DocTab><Gauge w={10} />Dashboard<Cross size={8} /></DocTab>
            <DocTab $active><Ledger w={10} />Finanzbuchhaltung<Cross size={8} /></DocTab>
          </DocTabs>
          <Columns>
            <Steps>
              <ul>
                {steps.map(name => (
                  <li key={name}><Step href='#konto' $active={name === 'Konto'}>{name}</Step></li>
                ))}
              </ul>
            </Steps>
            <Content>
              <Cards>
                <Card><b>Finanzbuchhaltung</b><b>10000</b><span>Grundackerweg 10/12</span></Card>
                <Card><b>FIBU-Jahr</b><b>2021</b></Card>
                <Card $active><b>FIBU-Konto</b><b>1000</b><span>Kasse</span></Card>
                <Balance>
                  <Chevron color={BLUE} /><b>Kontosaldo heute:</b><span>0.00</span>
                  <b>Budget:</b><span>0.00</span>
                </Balance>
              </Cards>
              <PageTabs>
                <PageTab $active $width='57px'><span>Stammdaten</span></PageTab>
                <PageTab $width='50px'>Buchungen</PageTab>
                <PageTab $width='57px'>Budgetierung</PageTab>
              </PageTabs>
              <Workspace>
                <AccountList />
                <AccountForm />
              </Workspace>
            </Content>
          </Columns>
        </Document>
      </Body>
    </Page>
  )
}

export default App
